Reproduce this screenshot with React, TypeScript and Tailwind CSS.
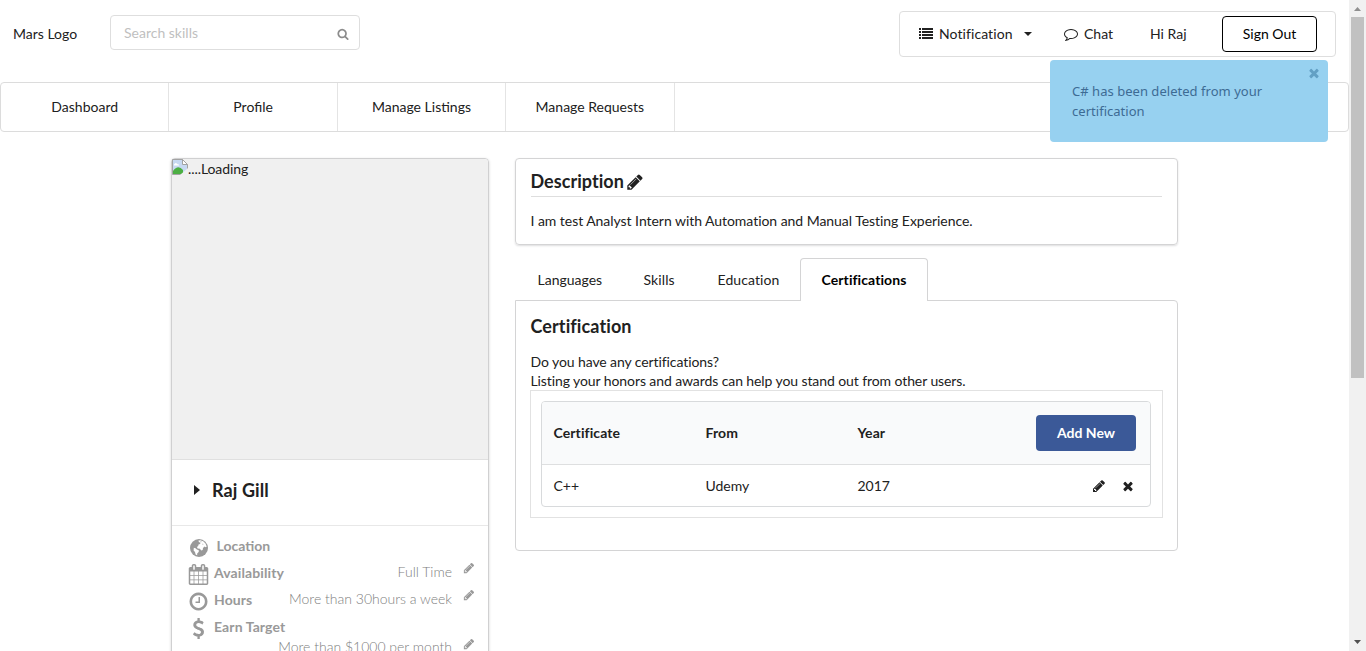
import React from "react";

const paths = {
  pencil:
    "M491 1536l91-91-235-235-91 91v107h128v128h107zm523-928q0-22-22-22-10 0-17 7l-542 542q-7 7-7 17 0 22 22 22 10 0 17-7l542-542q7-7 7-17zm-54-192l416 416-832 832h-416v-416zm683 96q0 53-37 90l-166 166-416-416 166-165q36-38 90-38 53 0 91 38l235 234q37 39 37 91z",
  times:
    "M1490 1322q0 40-28 68l-136 136q-28 28-68 28t-68-28l-294-294-294 294q-28 28-68 28t-68-28l-136-136q-28-28-28-68t28-68l294-294-294-294q-28-28-28-68t28-68l136-136q28-28 68-28t68 28l294 294 294-294q28-28 68-28t68 28l136 136q28 28 28 68t-28 68l-294 294 294 294q28 28 28 68z",
  search:
    "M1216 832q0-185-131.5-316.5t-316.5-131.5-316.5 131.5-131.5 316.5 131.5 316.5 316.5 131.5 316.5-131.5 131.5-316.5zm512 832q0 52-38 90t-90 38q-54 0-90-38l-343-342q-179 124-399 124-143 0-273.5-55.5t-225-150-150-225-55.5-273.5 55.5-273.5 150-225 225-150 273.5-55.5 273.5 55.5 225 150 150 225 55.5 273.5q0 220-124 399l343 343q37 37 37 90z",
  list: "M0 128h256v256H0zM384 128h1408v256H384zM0 512h256v256H0zM384 512h1408v256H384zM0 896h256v256H0zM384 896h1408v256H384zM0 1280h256v256H0zM384 1280h1408v256H384z",
  comment:
    "M896 384q-204 0-381.5 69.5t-282 187.5-104.5 255q0 112 71.5 213.5t201.5 175.5l87 50-27 96q-24 91-70 172 152-63 275-171l43-38 57 6q69 8 130 8 204 0 381.5-69.5t282-187.5 104.5-255-104.5-255-282-187.5-381.5-69.5zm896 512q0 174-120 321.5t-326 233-450 85.5q-70 0-145-8-198 175-460 242-49 14-114 22h-5q-15 0-27-10.5t-16-27.5v-1q-3-4-.5-12t2-10 4.5-9.5l6-9 7-8.500 8-9q7-8 31-34.5t34.5-38 31-39.5 32.5-51 27-59 26-76q-157-89-247.5-220t-90.500-281q0-174 120-321.5t326-233 450-85.5 450 85.5 326 233 120 321.5z",
  calendar:
    "M192 1664h288v-288h-288v288zm352 0h320v-288h-320v288zm-352-352h288v-320h-288v320zm352 0h320v-320h-320v320zm-352-384h288v-288h-288v288zm736 736h320v-288h-320v288zm-384-736h320v-288h-320v288zm768 736h288v-288h-288v288zm-384-352h320v-320h-320v320zm-352-864v-288q0-13-9.5-22.5t-22.5-9.5h-64q-13 0-22.5 9.5t-9.5 22.5v288q0 13 9.5 22.5t22.5 9.5h64q13 0 22.5-9.5t9.5-22.5zm736 864h288v-320h-288v320zm-384-384h320v-288h-320v288zm384 0h288v-288h-288v288zm32-480v-288q0-13-9.5-22.5t-22.5-9.5h-64q-13 0-22.5 9.5t-9.5 22.5v288q0 13 9.5 22.5t22.5 9.5h64q13 0 22.5-9.5t9.5-22.5zm384-64v1280q0 52-38 90t-90 38h-1408q-52 0-90-38t-38-90v-1280q0-52 38-90t90-38h128v-96q0-66 47-113t113-47h64q66 0 113 47t47 113v96h384v-96q0-66 47-113t113-47h64q66 0 113 47t47 113v96h128q52 0 90 38t38 90z",
  clock:
    "M1024 544v448q0 14-9 23t-23 9h-320q-14 0-23-9t-9-23v-64q0-14 9-23t23-9h224v-352q0-14 9-23t23-9h64q14 0 23 9t9 23zm416 352q0-148-73-273t-198-198-273-73-273 73-198 198-73 273 73 273 198 198 273 73 273-73 198-198 73-273zm224 0q0 209-103 385.5t-279.5 279.5-385.5 103-385.5-103-279.5-279.5-103-385.5 103-385.5 279.5-279.5 385.5-103 385.5 103 279.5 279.5 103 385.5z",
  dollar:
    "M1362 1185q0 153-99.5 263.5t-258.5 136.5v175q0 14-9 23t-23 9h-135q-13 0-22.5-9.5t-9.5-22.5v-175q-66-9-127.5-31t-101.5-44.5-74-48-46.5-37.5-17.5-18q-17-21-2-41l103-135q7-10 23-12 15-2 24 9l2 2q113 99 243 125 37 8 74 8 81 0 142.5-43t61.5-122q0-28-15-53t-33.5-42-58.5-37.5-66-32-80-32.5q-39-16-61.5-25t-61.5-26.5-62.5-31-56.5-35.5-53.5-42.5-43.5-49-35.5-58-21-66.5-8.5-78q0-138 98-242t255-134v-180q0-13 9.5-22.5t22.5-9.5h135q14 0 23 9t9 23v176q57 6 110.5 23t87 33.5 63.5 37.5 39 29 15 14q17 18 5 38l-81 146q-8 15-23 16-14 3-27-7-3-3-14.5-12t-39-26.5-58.5-32-74.5-26-85.5-11.5q-95 0-155 43t-60 111q0 26 8.5 48t29.5 41.5 39.5 33 56 31 60.5 27 70 27.5q53 20 81 31.5t76 35 75.5 42.5 62 50 53 63.5 31.5 76.5 13 94z",
};

function Icon({ name, className }: { name: keyof typeof paths; className: string }) {
  return (
    <svg viewBox="0 0 1792 1792" fill="currentColor" className={`shrink-0 ${className}`}>
      <path d={paths[name]} />
    </svg>
  );
}

function Globe() {
  return (
    <svg viewBox="0 0 18 18" className="mt-1 mr-[9px] ml-[1.500px] size-[18px] shrink-0">
      <circle cx="9" cy="9" r="9" fill="#999" />
      <path
        d="M8.200 1.800l2-.6 3 1 2.300 2.200 1.200 3-.9.8-1.300-.7-1.500 1.400-.3 2.100-1.500.4-1.300-1.600-2.200-.2-.8-1.500 1.300-1 .3-1.500 1.600-.5.400-1.300-1.300-.5z"
        fill="#fff"
      />
      <path d="M3.800 8.800l1.700.4 1.400 1.400 1.900.7-.1 1.700-1.400 1.300-.2 1.900-1.500-.8-.6-2.300-1.400-1.700z" fill="#fff" />
      <path d="M10.300 2.200l1.300.3-.6 1zM12.200 4.700l1.400.3-.8.700z" fill="#999" />
    </svg>
  );
}

function Header() {
  return (
    <header className="flex h-[82px] items-start pt-[11px] pr-[13px] pl-[13px]">
      <div className="mt-[13px] w-[97px]">Mars Logo</div>
      <div className="mt-1 flex h-[35px] w-[250px] items-center justify-between rounded border border-[#dedede] pr-2.5 pl-[13px]">
        <span className="pt-px text-[#bfbfbf]">Search skills</span>
        <Icon name="search" className="mt-[3px] size-3 text-[#8c8c8c]" />
      </div>
      <div className="ml-auto flex h-[46px] w-[437px] items-center rounded border border-[#dedede] pl-[19px]">
        <Icon name="list" className="mr-1.5 size-3.5" />
        <span className="w-[85px] tracking-[0.08px]">Notification</span>
        <svg viewBox="0 0 8 4" className="w-2 fill-current">
          <path d="M0 0h8L4 4z" />
        </svg>
        <Icon name="comment" className="mr-1.5 ml-8 size-3.5" />
        <span className="w-[66px]">Chat</span>
        <span className="w-[72px]">Hi Raj</span>
        <button className="h-9 w-[95px] rounded border border-black text-black">Sign Out</button>
      </div>
    </header>
  );
}

function Nav() {
  return (
    <nav className="flex h-[50px] rounded border border-[#dcdcdc]">
      {["Dashboard", "Profile", "Manage Listings", "Manage Requests"].map((t) => (
        <a key={t} className="flex w-[168.400px] items-center justify-center border-r border-[#e4e4e4]">
          {t}
        </a>
      ))}
    </nav>
  );
}

function BrokenImage() {
  return (
    <svg viewBox="0 0 16 16" className="size-4 shrink-0">
      <path d="M.5.5h10l5 5v10H.5z" fill="#c7d9f2" stroke="#a3a3a3" />
      <path d="M10.500.5v5h5z" fill="#fff" stroke="#a3a3a3" />
      <path d="M2 5.500q1.500-3 4 0h1v1H2z" fill="#fff" />
      <path d="M1 15v-3q5-7 10-1v4z" fill="#4caf43" />
      <path d="M8 16l8-7v7z" fill="#f0f0f0" />
    </svg>
  );
}

const details = [
  { icon: "calendar", label: "Availability", value: "Full Time" },
  { icon: "clock", label: "Hours", value: "More than 30hours a week" },
] as const;

function ProfileCard() {
  return (
    <aside className="h-[600px] w-[318px] rounded border border-[#d0d0d1] shadow-[0_1px_3px_0_#d4d4d5]">
      <div className="flex h-[300px] items-start rounded-t bg-[#f0f0f0]">
        <BrokenImage />
        <span className="tracking-[-0.08px]">....Loading</span>
      </div>
      <div className="flex h-[66px] items-center border-t border-[#e0e0e0] pb-[5px] pl-[22px] text-lg font-bold tracking-[0.1px]">
        <svg viewBox="0 0 6 10" className="mr-3 h-2.5 w-1.5 fill-current">
          <path d="M0 0l6 5-6 5z" />
        </svg>
        Raj Gill
      </div>
      <div className="border-t border-[#e8e8e8] pt-1.5 pr-[13px] pl-4 text-[#999999]">
        <div className="flex h-[27px] items-center">
          <Globe />
          <b>Location</b>
        </div>
        {details.map((d) => (
          <div key={d.label} className="flex h-[27px] items-center">
            <Icon name={d.icon} className="mt-[3px] mr-[5px] size-[21px]" />
            <b className="tracking-[0.1px]">{d.label}</b>
            <span className="mt-[-2px] ml-auto font-light text-[#808080]">{d.value}</span>
            <Icon name="pencil" className="mt-[-9px] ml-[11px] size-3" />
          </div>
        ))}
        <div className="flex h-[27px] items-center">
          <Icon name="dollar" className="mt-[3px] mr-[5px] size-[21px]" />
          <b className="tracking-[0.1px]">Earn Target</b>
        </div>
        <div className="mt-[-3px] flex items-center justify-end">
          <span className="font-light text-[#808080]">More than $1000 per month</span>
          <Icon name="pencil" className="mt-[-7px] ml-[11px] size-3" />
        </div>
      </div>
    </aside>
  );
}

function Description() {
  return (
    <section className="h-[87px] rounded border border-[#d4d4d5] px-[15px] pt-[9px] shadow-[0_1px_2px_0_rgba(34,36,38,0.15)]">
      <h3 className="flex h-[29px] items-center border-b border-[#dedede] text-lg font-bold">
        <span className="ml-[-0.500px] pb-[3px] tracking-[0.05px]">Description</span>
        <Icon name="pencil" className="ml-0.5 size-[18px]" />
      </h3>
      <p className="mt-3.5 ml-[-0.500px] tracking-[-0.044px]">
        I am test Analyst Intern with Automation and Manual Testing Experience.
      </p>
    </section>
  );
}

function Certifications() {
  return (
    <section className="mt-[13px]">
      <div className="relative z-10 mb-[-1px] flex h-[43px] items-center">
        <span className="w-[106px] pl-[22.500px]">Languages</span>
        <span className="w-[74px] pl-[22.500px] tracking-[0.1px]">Skills</span>
        <span className="w-[105px] pl-[22.500px] tracking-[0.1px]">Education</span>
        <span className="flex h-[43px] w-32 items-center justify-center rounded-t border border-b-0 border-[#d4d4d5] bg-white font-bold tracking-[0.08px] text-black">
          Certifications
        </span>
      </div>
      <div className="h-[251px] rounded-b rounded-tr border border-[#d4d4d5] px-3.5 pt-3">
        <h3 className="px-[0.500px] text-lg leading-[26px] font-bold tracking-[0.1px]">Certification</h3>
        <p className="mt-[13px] px-[0.500px] leading-[19px] tracking-[-0.09px]">
          Do you have any certifications?
          <br />
          Listing your honors and awards can help you stand out from other users.
        </p>
        <div className="h-32 w-[633px] border border-[#e2e2e2] p-2.5">
          <div className="h-[106px] w-[610px] overflow-hidden rounded border border-[#d8dadc]">
            <div className="flex h-[63px] items-center border-b border-[#dedfe0] bg-[#f9fafb] pr-3.5 pl-[11.500px] font-bold">
              <span className="w-[152px] tracking-[0.1px]">Certificate</span>
              <span className="w-[152px] tracking-[0.1px]">From</span>
              <span className="tracking-[0.1px]">Year</span>
              <button className="ml-auto h-9 w-[100px] rounded bg-[#3b5998] font-bold text-white">Add New</button>
            </div>
            <div className="flex h-[42px] items-center pr-[15px] pl-[11.500px]">
              <span className="w-[152px]">C++</span>
              <span className="w-[152px]">Udemy</span>
              <span>2017</span>
              <Icon name="pencil" className="mr-[15px] ml-auto size-3.5" />
              <Icon name="times" className="size-3.5" />
            </div>
          </div>
        </div>
      </div>
    </section>
  );
}

function Toast() {
  return (
    <div className="absolute top-[60px] left-[1050px] z-20 h-[82px] w-[278px] rounded bg-[#97d1f0] pt-[22px] pl-[22px] font-['Noto_Sans'] text-[13px] leading-[19.500px] text-[#3d6b94]">
      <p className="w-[210px] tracking-[0.03px]">C# has been deleted from your certification</p>
      <Icon name="times" className="absolute top-1.5 right-[7px] size-3.5 text-[#63a0c4]" />
    </div>
  );
}

function Scrollbar() {
  return (
    <div className="flex w-[17px] flex-col items-center bg-[#f1f1f1]">
      <svg viewBox="0 0 17 17" className="size-[17px]">
        <path d="M5 11h7L8.500 7z" fill="#8f8f8f" />
      </svg>
      <div className="h-[361px] w-[13px] bg-[#c1c1c1]" />
      <svg viewBox="0 0 17 17" className="mt-auto size-[17px]">
        <path d="M5 6h7l-3.500 4z" fill="#505050" />
      </svg>
    </div>
  );
}

export default function App() {
  return (
    <div className="relative flex h-[651px] w-[1366px] overflow-hidden bg-white font-[Lato,sans-serif] text-sm leading-5 text-[#212121]">
      <div className="w-[1349px]">
        <Header />
        <Nav />
        <main className="flex items-start gap-[26px] pt-[26px] pl-[171px]">
          <ProfileCard />
          <div className="w-[663px]">
            <Description />
            <Certifications />
          </div>
        </main>
      </div>
      <Scrollbar />
      <Toast />
    </div>
  );
}
